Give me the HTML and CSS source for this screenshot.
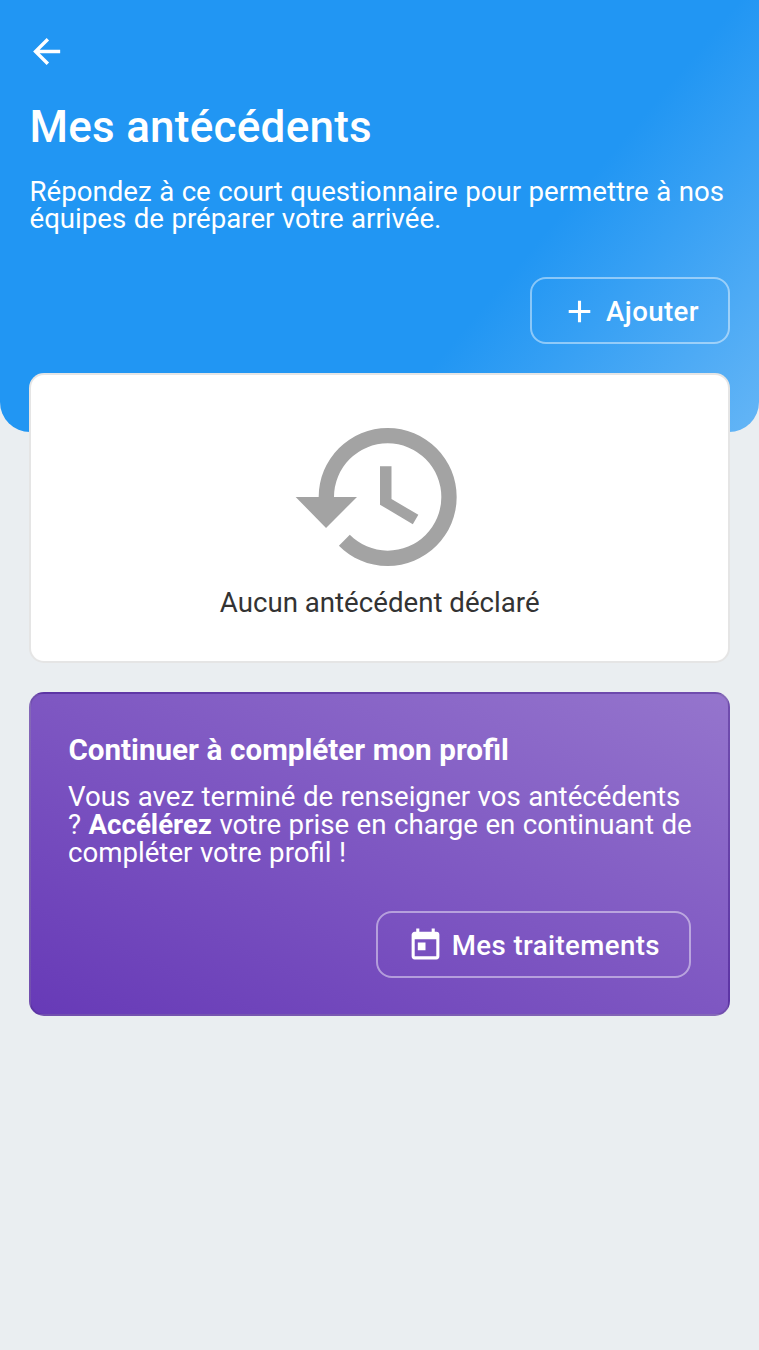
FILE: index.html
```
<!DOCTYPE html>
<html lang="fr">
<head>
  <meta charset="UTF-8">
  <title>Mes antécédents</title>
  <link rel="stylesheet" href="styles.css">
</head>
<body>
  <header class="header">
    <a class="back" aria-label="Retour">
      <svg viewBox="0 0 24 24"><path d="M20,11V13H8L13.5,18.5L12.08,19.92L4.16,12L12.08,4.08L13.5,5.5L8,11H20Z"/></svg>
    </a>
    <h1>Mes antécédents</h1>
    <p class="intro">Répondez à ce court questionnaire pour permettre à nos équipes de préparer votre arrivée.</p>
    <div class="actions">
      <button class="btn">
        <svg viewBox="0 0 24 24"><path d="M19,13H13V19H11V13H5V11H11V5H13V11H19V13Z"/></svg>
        <span>Ajouter</span>
      </button>
    </div>
  </header>

  <main>
    <section class="card empty">
      <svg viewBox="0 0 24 24"><path d="M13.5,8H12V13L16.28,15.54L17,14.33L13.5,12.25V8M13,3A9,9 0 0,0 4,12H1L4.96,16.03L9,12H6A7,7 0 0,1 13,5A7,7 0 0,1 20,12A7,7 0 0,1 13,19C11.07,19 9.32,18.21 8.06,16.94L6.64,18.36C8.27,20 10.5,21 13,21A9,9 0 0,0 22,12A9,9 0 0,0 13,3"/></svg>
      <p>Aucun antécédent déclaré</p>
    </section>

    <section class="card next">
      <h2>Continuer à compléter mon profil</h2>
      <p>Vous avez terminé de renseigner vos antécédents ? <strong>Accélérez</strong> votre prise en charge en continuant de compléter votre profil !</p>
      <div class="actions">
        <button class="btn">
          <svg viewBox="0 0 24 24"><path d="M7,10H12V15H7M19,19H5V8H19M19,3H18V1H16V3H8V1H6V3H5C3.89,3 3,3.9 3,5V19A2,2 0 0,0 5,21H19A2,2 0 0,0 21,19V5A2,2 0 0,0 19,3Z"/></svg>
          <span>Mes traitements</span>
        </button>
      </div>
    </section>
  </main>
</body>
</html>
```

FILE: styles.css
```
* { box-sizing: border-box; }
body { margin: 0; min-height: 1350px; background-color: #eaeef1; font-family: Roboto, sans-serif; font-size: 27.65px; line-height: 28px; color: #333; }
h1, h2, p { margin: 0; }
svg { display: block; flex: none; fill: currentColor; }

.header { height: 432px; padding: 31px 29px 0 29.5px; border-radius: 0 0 30px 30px; background: linear-gradient(130deg, #2196f3 66%, #64b5f6); color: #fff; }
.back { display: block; width: 41px; height: 41px; margin-left: -4px; }
.header h1 { margin-top: 29.5px; font-size: 44px; line-height: 50px; font-weight: 500; letter-spacing: 0.25px; }
.intro { margin-top: 26px; line-height: 27.5px; word-spacing: 0.6px; }

.actions { display: flex; justify-content: flex-end; }
.header .actions { margin-top: 44.5px; }
.btn { display: flex; align-items: center; gap: 7px; height: 67px; padding: 3px 29px 0 30px; border: 2px solid rgba(255, 255, 255, 0.45); border-radius: 16px; background: none; color: #fff; font: 500 27.65px/28px Roboto, sans-serif; letter-spacing: 0.4px; }
.btn svg { width: 37px; height: 37px; margin: -1px 0 0 -1px; }
.btn span { margin-left: 1px; }
.next .btn svg { margin: -2px -0.5px 0; }

main { display: flex; flex-direction: column; gap: 29px; margin: -59px 29px 0 29.4px; }
.card { border: 2px solid rgba(0, 0, 0, 0.1); border-radius: 15px; }
.empty { display: flex; flex-direction: column; align-items: center; height: 290px; padding-top: 29.5px; background-color: #fff; }
.empty svg { width: 184px; height: 184px; color: #a3a3a3; }
.empty p { margin-top: 0.5px; }
.next { height: 324px; padding: 42px 37px 0; background-image: linear-gradient(to top right, #673ab7, #7e57c2, #9575cd); color: #fff; }
.next h2 { font-size: 29.6px; line-height: 28px; font-weight: 700; word-spacing: 0.3px; }
.next p { margin: 19px -4px 0 -0.4px; word-spacing: 0.6px; }
.next .actions { margin-top: 44px; }
```
